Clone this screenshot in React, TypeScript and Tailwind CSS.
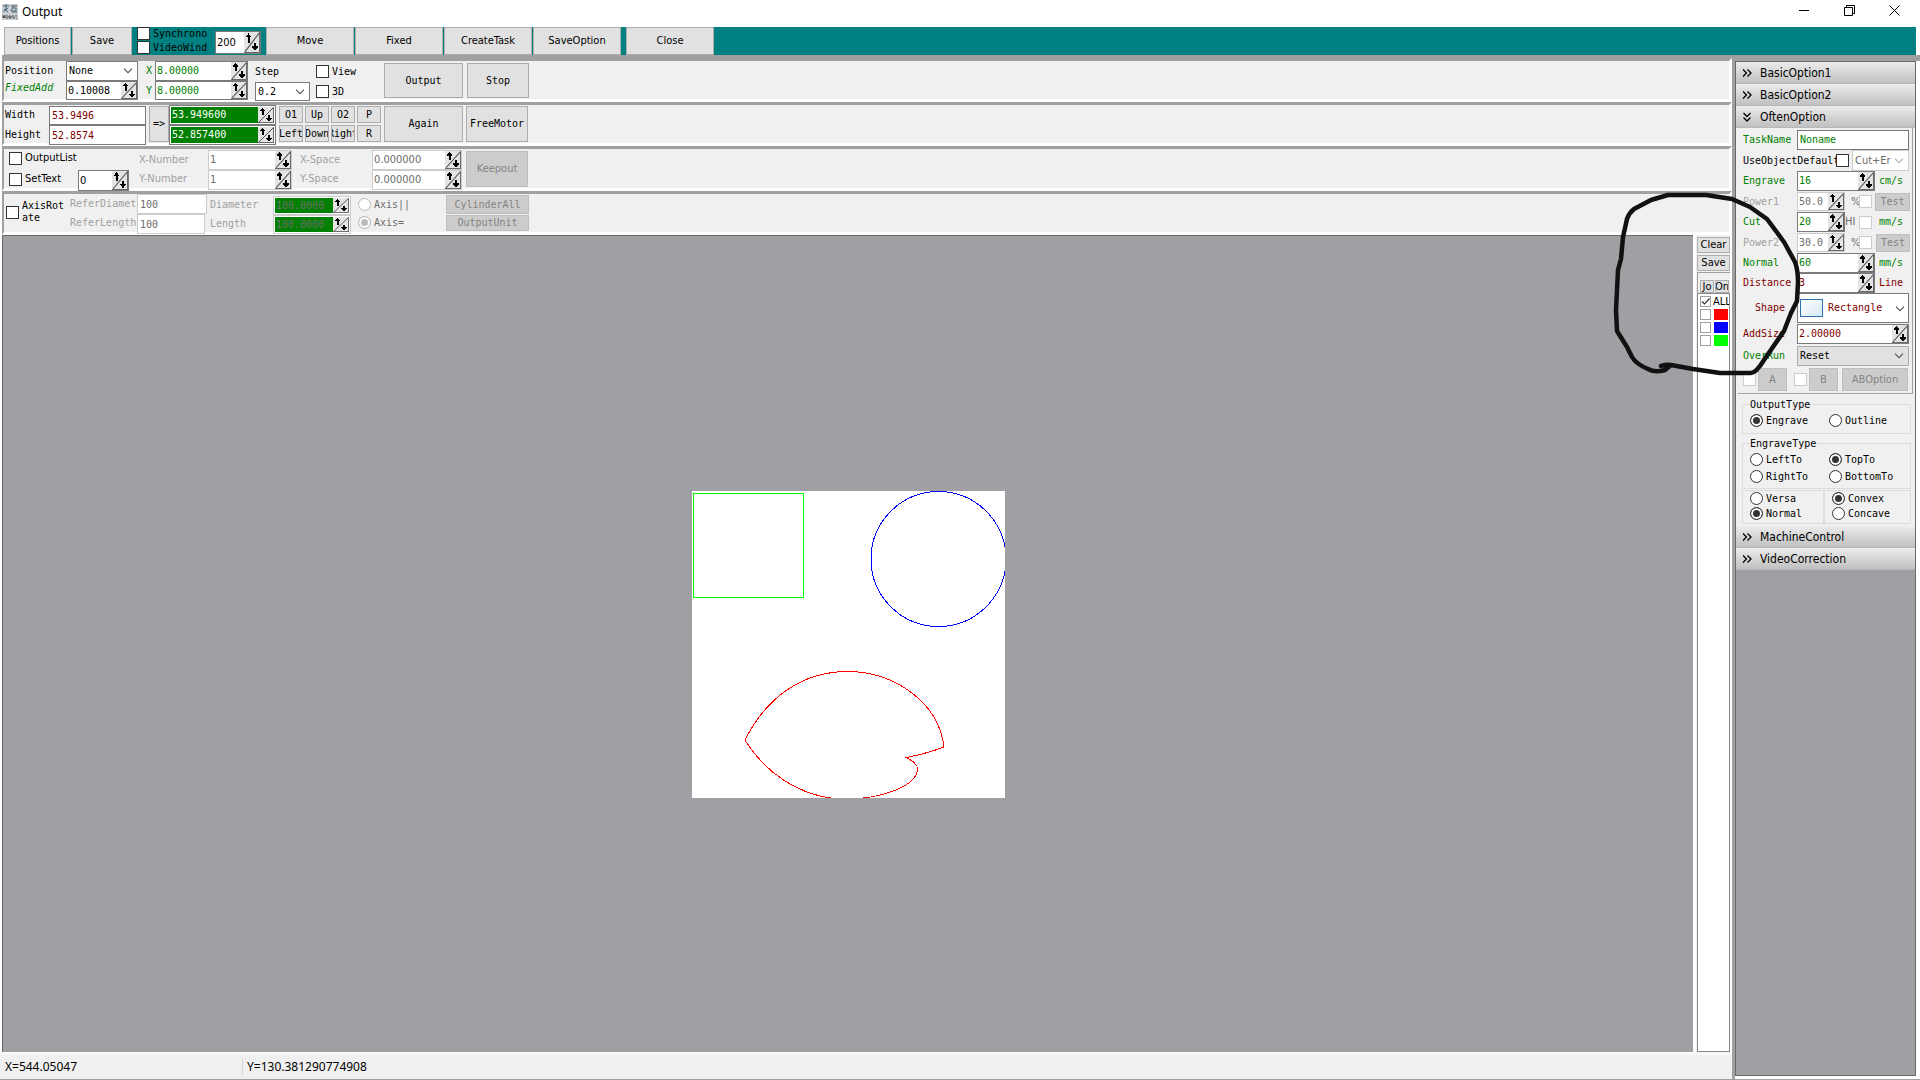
import React, { useState } from "react";

const mono = "font-['DejaVu_Sans_Mono',monospace] text-[10px] leading-[12px]";
const sans = "font-['DejaVu_Sans_Condensed','Noto_Sans',sans-serif] text-[11px] leading-[14px]";

function cx(...parts: (string | undefined | false)[]) {
  return parts.filter(Boolean).join(" ");
}

function SpinGlyph() {
  return (
    <svg viewBox="0 0 16 16" className="h-full w-full" shapeRendering="crispEdges" preserveAspectRatio="none">
      <rect width="16" height="16" fill="#e4e4e4" />
      <path d="M0 15.5H16M15.5 0V16" stroke="#696969" fill="none" />
      <path d="M1 15L15 1" stroke="#555" shapeRendering="auto" />
      <path d="M4 1h1v1h1v1h1v1h-1v4h-2v-4h-2v-1h1v-1h1z" fill="#000" />
      <path d="M10 8h2v3h2v1h-1v1h-1v1h-2v-1h-1v-1h-1v-1h2z" fill="#000" />
    </svg>
  );
}

type SpinProps = { value: string; label: string; className?: string; fill?: string; font?: string; off?: boolean };

function Spin({ value, label, className, fill, font = mono, off }: SpinProps) {
  return (
    <div className={cx("flex border bg-white", off ? "border-[#cccccc]" : "border-[#7a7a7a]", className)}>
      <input aria-label={label} defaultValue={value} disabled={off} className={cx("min-w-0 flex-1 self-stretch px-px outline-none", font, fill)} />
      <button aria-label={label + " step"} disabled={off} className="w-4 shrink-0">
        <SpinGlyph />
      </button>
    </div>
  );
}

function Field({ value, label, className }: { value: string; label: string; className?: string }) {
  return <input aria-label={label} defaultValue={value} className={cx("border bg-white px-0.5 outline-none", className)} />;
}

function Drop({ value, label, className, off }: { value: string; label: string; className?: string; off?: boolean }) {
  return (
    <div className={cx("relative flex border", off ? "border-[#cccccc]" : "border-[#7a7a7a]", className)}>
      <select aria-label={label} disabled={off} className="w-full appearance-none bg-transparent pl-0.5 pr-4 opacity-100 outline-none">
        <option>{value}</option>
      </select>
      <svg viewBox="0 0 10 6" className="pointer-events-none absolute right-1 top-1/2 h-1.5 w-2.5 -translate-y-1/2">
        <path d="M1 .7L5 4.7L9 .7" fill="none" stroke={off ? "#b0b0b0" : "#555"} strokeWidth="1.1" />
      </svg>
    </div>
  );
}

function Check({ label, off, small, on, hide, className }: { label: string; off?: boolean; small?: boolean; on?: boolean; hide?: boolean; className?: string }) {
  const [v, setV] = useState(!!on);
  return (
    <label className={cx("flex items-center gap-[3px] whitespace-nowrap", className)}>
      <span className="relative flex shrink-0">
        <input
          type="checkbox"
          aria-label={label}
          disabled={off}
          checked={v}
          onChange={() => setV(!v)}
          className={cx("appearance-none border bg-white", small ? "h-[11px] w-[11px] border-[#a0a0a0]" : "h-[13px] w-[13px]", !small && (off ? "border-[#cccccc]" : "border-[#333]"))}
        />
        {v && (
          <svg viewBox="0 0 11 11" className="pointer-events-none absolute inset-0">
            <path d="M2 5.5L4.5 8L9.5 2.5" fill="none" stroke="#333" strokeWidth="1.2" />
          </svg>
        )}
      </span>
      {!hide && <span>{label}</span>}
    </label>
  );
}

function Radio({ label, name, on, off, className }: { label: string; name: string; on?: boolean; off?: boolean; className?: string }) {
  return (
    <label className={cx("flex items-center gap-[3px] whitespace-nowrap", className)}>
      <input
        type="radio"
        name={name}
        defaultChecked={on}
        disabled={off}
        className={cx(
          "h-[13px] w-[13px] shrink-0 appearance-none rounded-full border bg-white checked:shadow-[inset_0_0_0_2px_white]",
          off ? "border-[#bcbcbc] checked:bg-[#bcbcbc]" : "border-[#333] checked:bg-[#333]"
        )}
      />
      <span>{label}</span>
    </label>
  );
}

function Btn({ children, className, off }: { children: React.ReactNode; className?: string; off?: boolean }) {
  return (
    <button
      disabled={off}
      className={cx("flex shrink-0 items-center justify-center overflow-hidden whitespace-nowrap border", off ? "border-[#bfbfbf] bg-[#cccccc] text-[#838383]" : "border-[#adadad] bg-[#e1e1e1]", className)}
    >
      {children}
    </button>
  );
}

function Strip({ children, tall }: { children: React.ReactNode; tall?: boolean }) {
  return (
    <section
      className={cx(
        "flex items-start border-b-[3px] border-l-2 border-r-[3px] border-t-[3px] border-b-white border-l-[#a0a0a0] border-r-white border-t-[#a0a0a0] bg-[#f0f0f0]",
        tall ? "h-[45px]" : "h-11",
        mono
      )}
    >
      {children}
    </section>
  );
}

function TitleBar() {
  return (
    <header className="flex h-[27px] items-center bg-white pl-0.5 font-['Noto_Sans',sans-serif] text-[12px]">
      <svg viewBox="0 0 16 16" className="mb-1 h-4 w-4">
        <rect width="16" height="16" fill="#c9ced2" />
        <path d="M1 2h6M4 0v7M2 5l4 3M1 8l5-4M9 2h6M12 1l-3 6h5v-3h-3M10 8h5" stroke="#4e6674" fill="none" />
        <path d="M1 11v3l1-2 1 2v-3M5 11v4M7 12h2v2h-2zM11 11v3h2M14 11v2M15 14v1" stroke="#333" strokeWidth=".8" fill="none" />
      </svg>
      <h1 className="mb-[3px] ml-1 flex-1">Output</h1>
      <div className="mb-1.5 flex items-center gap-[34px] pr-5">
        <button aria-label="Minimize">
          <svg viewBox="0 0 11 11" className="h-[11px] w-[11px]"><path d="M0 5.5h10" stroke="#000" /></svg>
        </button>
        <button aria-label="Restore">
          <svg viewBox="0 0 11 11" className="h-[11px] w-[11px]"><path d="M.5 2.500h8v8h-8zM2.500 2v-1.500h8v8h-1.500" fill="none" stroke="#000" /></svg>
        </button>
        <button aria-label="Close window">
          <svg viewBox="0 0 11 11" className="h-[11px] w-[11px]"><path d="M.5 .5l10 10M10.500 .5l-10 10" stroke="#000" /></svg>
        </button>
      </div>
    </header>
  );
}

function Toolbar() {
  return (
    <nav className={cx("mx-1 flex h-7 items-stretch bg-[#008080]", sans)}>
      <Btn className="w-[67px]">Positions</Btn>
      <Btn className="ml-px w-[60px]">Save</Btn>
      <div className={cx("ml-[5px] flex w-[78px] flex-col gap-px", mono)}>
        <Check label="Synchrono" />
        <Check label="VideoWind" />
      </div>
      <Spin label="Speed" value="200" font={sans} className="mb-px mt-1 w-[46px]" />
      <Btn className="ml-[5px] w-[88px]">Move</Btn>
      <Btn className="ml-px w-[88px]">Fixed</Btn>
      <Btn className="ml-px w-[88px]">CreateTask</Btn>
      <Btn className="ml-px w-[88px]">SaveOption</Btn>
      <Btn className="ml-[5px] w-[88px]">Close</Btn>
    </nav>
  );
}

function PositionStrip() {
  return (
    <Strip>
      <div className="ml-px mt-1 flex w-[61px] flex-col gap-[5px]">
        <span>Position</span>
        <span className="italic text-[#008000]">FixedAdd</span>
      </div>
      <div className="flex w-[72px] flex-col">
        <Drop label="Position" value="None" className="h-5 bg-white" />
        <Spin label="FixedAdd" value="0.10008" className="h-[19px]" />
      </div>
      <div className="ml-2 mt-1 flex w-[9px] flex-col gap-2 text-[#008000]">
        <span>X</span>
        <span>Y</span>
      </div>
      <div className="flex w-[93px] flex-col text-[#008000]">
        <Spin label="X" value="8.00000" className="h-5" />
        <Spin label="Y" value="8.00000" className="h-[19px]" />
      </div>
      <div className="ml-[7px] mt-[5px] flex w-[55px] flex-col gap-1">
        <span>Step</span>
        <Drop label="Step" value="0.2" className="h-[19px] bg-white" />
      </div>
      <div className="ml-1.5 mt-1 flex w-[68px] flex-col gap-[7px]">
        <Check label="View" />
        <Check label="3D" />
      </div>
      <Btn className="mt-0.5 h-[35px] w-[79px]">Output</Btn>
      <Btn className="ml-1 mt-0.5 h-[35px] w-[62px]">Stop</Btn>
    </Strip>
  );
}

function SizeStrip() {
  const jog = ["O1", "Up", "O2", "P", "Left", "Down", "Right", "R"];
  return (
    <Strip>
      <div className="ml-px mt-1 flex w-11 flex-col gap-2">
        <span>Width</span>
        <span>Height</span>
      </div>
      <div className="mt-px flex w-[97px] flex-col text-[#800000]">
        <Field label="Width" value="53.9496" className="h-[19px] border-[#7a7a7a]" />
        <Field label="Height" value="52.8574" className="h-5 border-[#7a7a7a]" />
      </div>
      <Btn className="ml-[3px] mt-px h-9 w-5">=&gt;</Btn>
      <div className="flex w-[107px] flex-col text-white">
        <Spin label="Target width" value="53.949600" fill="bg-[#008000]" className="h-5 p-px" />
        <Spin label="Target height" value="52.857400" fill="bg-[#008000]" className="h-5 p-px" />
      </div>
      <div className="ml-[3px] mt-px grid grid-cols-4 gap-0.5">
        {jog.map((t) => (
          <Btn key={t} className="h-[17px] w-6">{t}</Btn>
        ))}
      </div>
      <Btn className="ml-[3px] mt-px h-9 w-[79px]">Again</Btn>
      <Btn className="ml-[3px] mt-px h-9 w-[62px]">FreeMotor</Btn>
    </Strip>
  );
}

function ListStrip() {
  return (
    <Strip tall>
      <div className={cx("ml-[5px] mt-0.5 flex w-[69px] flex-col gap-[7px]", sans)}>
        <Check label="OutputList" />
        <Check label="SetText" />
      </div>
      <Spin label="SetText" value="0" font={sans} className="mt-[21px] h-[21px] w-[51px]" />
      <div className={cx("ml-2.5 mt-1 flex w-[69px] flex-col gap-[5px] text-[#a0a0a0]", sans)}>
        <span>X-Number</span>
        <span>Y-Number</span>
      </div>
      <div className="mt-px flex w-[84px] flex-col text-[#6d6d6d]">
        <Spin off label="X-Number" value="1" font={sans} className="h-5" />
        <Spin off label="Y-Number" value="1" font={sans} className="h-5" />
      </div>
      <div className={cx("ml-2 mt-1 flex w-[72px] flex-col gap-[5px] text-[#a0a0a0]", sans)}>
        <span>X-Space</span>
        <span>Y-Space</span>
      </div>
      <div className="mt-px flex w-[90px] flex-col text-[#6d6d6d]">
        <Spin off label="X-Space" value="0.000000" font={sans} className="h-5" />
        <Spin off label="Y-Space" value="0.000000" font={sans} className="h-5" />
      </div>
      <Btn off className={cx("ml-1 mt-0.5 h-9 w-[62px]", sans)}>Keepout</Btn>
    </Strip>
  );
}

function AxisStrip() {
  return (
    <Strip>
      <label className="ml-0.5 mt-1.5 flex w-16 items-center gap-[3px]">
        <input type="checkbox" className="h-[13px] w-[13px] shrink-0 appearance-none border border-[#333] bg-white" />
        <span className="w-[46px] break-all">AxisRotate</span>
      </label>
      <div className="mt-1 flex w-[67px] flex-col gap-[7px] whitespace-nowrap text-[#a0a0a0]">
        <span>ReferDiamet</span>
        <span>ReferLength</span>
      </div>
      <div className="flex w-[70px] flex-col text-[#6d6d6d]">
        <Field label="ReferDiameter" value="100" className="h-5 border-[#cccccc]" />
        <Field label="ReferLength" value="100" className="mr-0.5 h-5 border-[#cccccc]" />
      </div>
      <div className="ml-[3px] mt-[5px] flex w-[63px] flex-col gap-[7px] text-[#a0a0a0]">
        <span>Diameter</span>
        <span>Length</span>
      </div>
      <div className="mt-0.5 flex w-[78px] flex-col text-[#6d6d6d]">
        <Spin off label="Diameter" value="100.0000" fill="bg-[#008000]" className="h-[19px] p-px" />
        <Spin off label="Length" value="100.0000" fill="bg-[#008000]" className="h-[19px] p-px" />
      </div>
      <div className="ml-[7px] mt-1 flex w-[88px] flex-col gap-[5px] text-[#6d6d6d]">
        <Radio off name="axis" label="Axis||" />
        <Radio off on name="axis" label="Axis=" />
      </div>
      <div className="mt-px flex flex-col gap-px">
        <Btn off className="h-[19px] w-[83px]">CylinderAll</Btn>
        <Btn off className="h-4 w-[83px]">OutputUnit</Btn>
      </div>
    </Strip>
  );
}

function Artwork() {
  return (
    <svg viewBox="0 0 313 307" className="h-[307px] w-[313px] bg-white" fill="none" shapeRendering="crispEdges">
      <rect x="1.500" y="2.500" width="110" height="104" stroke="#00ff00" />
      <ellipse cx="246.500" cy="68" rx="67.500" ry="67.500" stroke="#0000ff" />
      <path
        d="M53.500 248C75 206 110 181 155 180.500C203 180.500 247 212 252 256C239 261 227 264 214.500 266.500C221 270 225 273 225.500 277C226 296 186 309 149 308C107 306 73 281 53.500 250Z"
        stroke="#ff0000"
      />
    </svg>
  );
}

function LayerList() {
  return (
    <aside className={cx("flex w-[39px] shrink-0 flex-col border-l-[3px] border-r-2 border-white bg-[#f0f0f0] pl-px", sans)}>
      <Btn className="mt-0.5 h-4 w-full">Clear</Btn>
      <Btn className="mt-0.5 h-4 w-full">Save</Btn>
      <div className="mt-px flex h-[21px] items-end gap-px border-l border-t border-[#a0a0a0] pl-0.5">
        <Btn className="h-[13px] w-3.5">Jo</Btn>
        <Btn className="h-[13px] w-3.5">On</Btn>
      </div>
      <ul className="flex flex-1 flex-col gap-0.5 overflow-hidden border border-[#828790] bg-white pl-0.5 pt-0.5">
        <li className="flex h-[11px] items-center gap-0.5">
          <Check small on hide label="All layers" />
          <span>ALL</span>
        </li>
        <li className="flex h-[11px] items-center gap-[3px]">
          <Check small hide label="Red layer" />
          <span className="h-[11px] w-3.5 bg-[#ff0000]" />
        </li>
        <li className="flex h-[11px] items-center gap-[3px]">
          <Check small hide label="Blue layer" />
          <span className="h-[11px] w-3.5 bg-[#0000ff]" />
        </li>
        <li className="flex h-[11px] items-center gap-[3px]">
          <Check small hide label="Green layer" />
          <span className="h-[11px] w-3.5 bg-[#00ff00]" />
        </li>
      </ul>
    </aside>
  );
}

function Head({ title, open }: { title: string; open?: boolean }) {
  return (
    <button
      aria-expanded={!!open}
      className="flex h-[22px] w-full items-center gap-2 border-b border-[#b8b8b8] bg-linear-to-b from-[#ececec] to-[#c0c0c0] pl-1.5 font-['DejaVu_Sans_Condensed','Noto_Sans',sans-serif] text-[12px] leading-[14px]"
    >
      <svg viewBox="0 0 10 10" className={cx("h-2.5 w-2.5", open && "rotate-90")}>
        <path d="M1 1.500L4.500 5L1 8.500M5.500 1.500L9 5L5.500 8.500" fill="none" stroke="#000" strokeWidth="1.3" />
      </svg>
      {title}
    </button>
  );
}

function Row({ label, tone, h, children, pad }: { label: string; tone: string; h: string; children: React.ReactNode; pad?: string }) {
  return (
    <div className={cx("flex items-center", h)}>
      <span className={cx("w-[54px] shrink-0 whitespace-nowrap", tone, pad)}>{label}</span>
      {children}
    </div>
  );
}

const green = "text-[#008000]";
const maroon = "text-[#800000]";
const grey = "text-[#a0a0a0]";

function OftenOption() {
  return (
    <div className={cx("bg-[#f0f0f0] pb-0.5", mono)}>
      <div className="mx-0.5 border-b border-r border-[#a0a0a0] pb-0.5 pl-[5px] pr-0.5 pt-px">
        <Row label="TaskName" tone={green} h="h-[21px]">
          <Field label="TaskName" value="Noname" className={cx("h-5 w-[112px] border-[#7a7a7a]", green)} />
        </Row>
        <div className="flex h-[21px] items-center">
          <span className="w-[93px] whitespace-nowrap">UseObjectDefault</span>
          <Check label="Use object default" hide />
          <Drop off label="Mode" value="Cut+Er" className={cx("ml-[3px] h-[21px] w-[57px] bg-white text-[#6d6d6d]", sans)} />
        </div>
        <Row label="Engrave" tone={green} h="h-5">
          <Spin label="Engrave" value="16" className={cx("h-5 w-[78px]", green)} />
          <span className={cx("ml-1", green)}>cm/s</span>
        </Row>
        <Row label="Power1" tone={grey} h="h-[21px]">
          <Spin off label="Power1" value="50.0" className="h-[19px] w-12 text-[#6d6d6d]" />
          <span className={cx("ml-1.5 w-2 text-[#6d6d6d]", sans)}>%</span>
          <Check off hide label="Power1 lock" />
          <Btn off className="ml-[3px] h-[18px] w-[35px]">Test</Btn>
        </Row>
        <Row label="Cut" tone={green} h="h-5">
          <Spin label="Cut" value="20" className={cx("h-5 w-12", green)} />
          <span className={cx("w-3.5 text-[#6d6d6d]", sans)}>HI</span>
          <Check off hide label="Cut high" />
          <span className={cx("ml-[7px]", green)}>mm/s</span>
        </Row>
        <Row label="Power2" tone={grey} h="h-[21px]">
          <Spin off label="Power2" value="30.0" className="h-[19px] w-12 text-[#6d6d6d]" />
          <span className={cx("ml-1.5 w-2 text-[#6d6d6d]", sans)}>%</span>
          <Check off hide label="Power2 lock" />
          <Btn off className="ml-1 h-[18px] w-[34px]">Test</Btn>
        </Row>
        <Row label="Normal" tone={green} h="h-5">
          <Spin label="Normal" value="60" className={cx("h-5 w-[78px]", green)} />
          <span className={cx("ml-1", green)}>mm/s</span>
        </Row>
        <Row label="Distance" tone={maroon} h="h-5">
          <Spin label="Distance" value="3" className={cx("h-5 w-[78px]", maroon)} />
          <span className={cx("ml-1", maroon)}>Line</span>
        </Row>
        <Row label="Shape" tone={maroon} h="h-[30px]" pad="pl-3">
          <div className={cx("relative flex w-[112px] border border-[#7a7a7a] bg-white", maroon)}>
            <select aria-label="Shape" className="h-7 w-full appearance-none pl-[30px] outline-none">
              <option>Rectangle</option>
            </select>
            <span className="pointer-events-none absolute left-0.5 top-[5px] h-[18px] w-[23px] border border-[#2a72b5] bg-linear-to-br from-white to-[#d5e8f5]" />
            <svg viewBox="0 0 10 6" className="pointer-events-none absolute right-[3px] top-3 h-1.5 w-2.5">
              <path d="M1 .7L5 4.7L9 .7" fill="none" stroke="#555" strokeWidth="1.1" />
            </svg>
          </div>
        </Row>
        <Row label="AddSize" tone={maroon} h="h-[21px]">
          <Spin label="AddSize" value="2.00000" className={cx("h-5 w-[112px]", maroon)} />
        </Row>
        <Row label="OverRun" tone={green} h="h-6">
          <Drop label="OverRun" value="Reset" className="h-5 w-[112px] border-[#adadad] bg-[#e1e1e1]" />
        </Row>
        <div className={cx("flex h-[23px] items-center", sans)}>
          <Check off hide label="Enable A" />
          <Btn off className="ml-0.5 h-[23px] w-[29px]">A</Btn>
          <Check off hide label="Enable B" className="ml-[7px]" />
          <Btn off className="ml-0.5 h-[23px] w-[29px]">B</Btn>
          <Btn off className="ml-1 h-[23px] w-[66px]">ABOption</Btn>
        </div>
      </div>
      <fieldset className="ml-1.5 mr-1 mt-1 h-9 border border-[#dcdcdc] px-[7px]">
        <legend className="leading-[13px]">OutputType</legend>
        <div className="mt-[3px] grid grid-cols-[79px_1fr]">
          <Radio on name="out" label="Engrave" />
          <Radio name="out" label="Outline" />
        </div>
      </fieldset>
      <fieldset className="ml-1.5 mr-1 mt-[3px] h-[52px] border border-[#dcdcdc] px-[7px]">
        <legend className="leading-[13px]">EngraveType</legend>
        <div className="mt-[3px] grid grid-cols-[79px_1fr] gap-y-1">
          <Radio name="dir" label="LeftTo" />
          <Radio on name="dir" label="TopTo" />
          <Radio name="dir" label="RightTo" />
          <Radio name="dir" label="BottomTo" />
        </div>
      </fieldset>
      <div className="ml-1.5 mr-1 mt-px grid h-[34px] grid-cols-[82px_1fr]">
        <div className="flex flex-col gap-0.5 border border-[#dcdcdc] pl-[7px] pt-px">
          <Radio name="side" label="Versa" />
          <Radio on name="side" label="Normal" />
        </div>
        <div className="flex flex-col gap-0.5 border border-[#dcdcdc] pl-[7px] pt-px">
          <Radio on name="curve" label="Convex" />
          <Radio name="curve" label="Concave" />
        </div>
      </div>
    </div>
  );
}

function Sidebar() {
  return (
    <aside className="flex w-[188px] shrink-0 border-l-[3px] border-t-[6px] border-[#a0a0a0]">
      <div className="mb-[3px] mr-1 flex-1 border border-[#696969] bg-[#a09fa4]">
        <Head title="BasicOption1" />
        <Head title="BasicOption2" />
        <Head title="OftenOption" open />
        <OftenOption />
        <Head title="MachineControl" />
        <Head title="VideoCorrection" />
      </div>
    </aside>
  );
}

function PenMark() {
  return (
    <svg viewBox="1600 180 220 210" className="pointer-events-none absolute right-[100px] top-[180px] h-[210px] w-[220px]" fill="none">
      <path
        d="M1661 366Q1667 364 1671 365L1665 370Q1655 373 1648 369Q1636 364 1632 357L1627 347L1617 331L1616 310L1618 270L1621 259L1623 237L1627 219Q1629 213 1634 209L1651 200L1668 195H1706L1732 199L1750 207L1767 219L1784 242L1795 262Q1798 270 1798 282L1797 301L1791 313L1784 331L1764 360Q1756 373 1751 373H1720L1693 369L1671 365"
        stroke="#111"
        strokeWidth="4.500"
        strokeLinejoin="round"
        strokeLinecap="round"
      />
    </svg>
  );
}

export default function App() {
  return (
    <div className="relative flex min-h-screen flex-col border-b border-[#a0a0a0] bg-white text-black">
      <TitleBar />
      <Toolbar />
      <div className="flex flex-1">
        <main className="flex min-w-0 flex-1 flex-col">
          <div className="ml-0.5 h-[3px] bg-[#a0a0a0]" />
          <div className="ml-0.5">
            <PositionStrip />
            <SizeStrip />
            <ListStrip />
            <AxisStrip />
          </div>
          <div className="ml-0.5 flex flex-1">
            <div className="flex flex-1 items-center justify-center border-l border-t border-[#696969] bg-[#a09fa4]">
              <Artwork />
            </div>
            <LayerList />
          </div>
          <footer className="flex h-[27px] items-center border-t-[3px] border-[#f8f8f8] bg-[#f0f0f0] pl-[5px] font-['Noto_Sans',sans-serif] text-[12px] leading-[16px]">
            <span className="w-[237px]">X=544.05047</span>
            <span className="border-l border-[#d7d7d7] pl-1">Y=130.381290774908</span>
          </footer>
        </main>
        <Sidebar />
      </div>
      <PenMark />
    </div>
  );
}
